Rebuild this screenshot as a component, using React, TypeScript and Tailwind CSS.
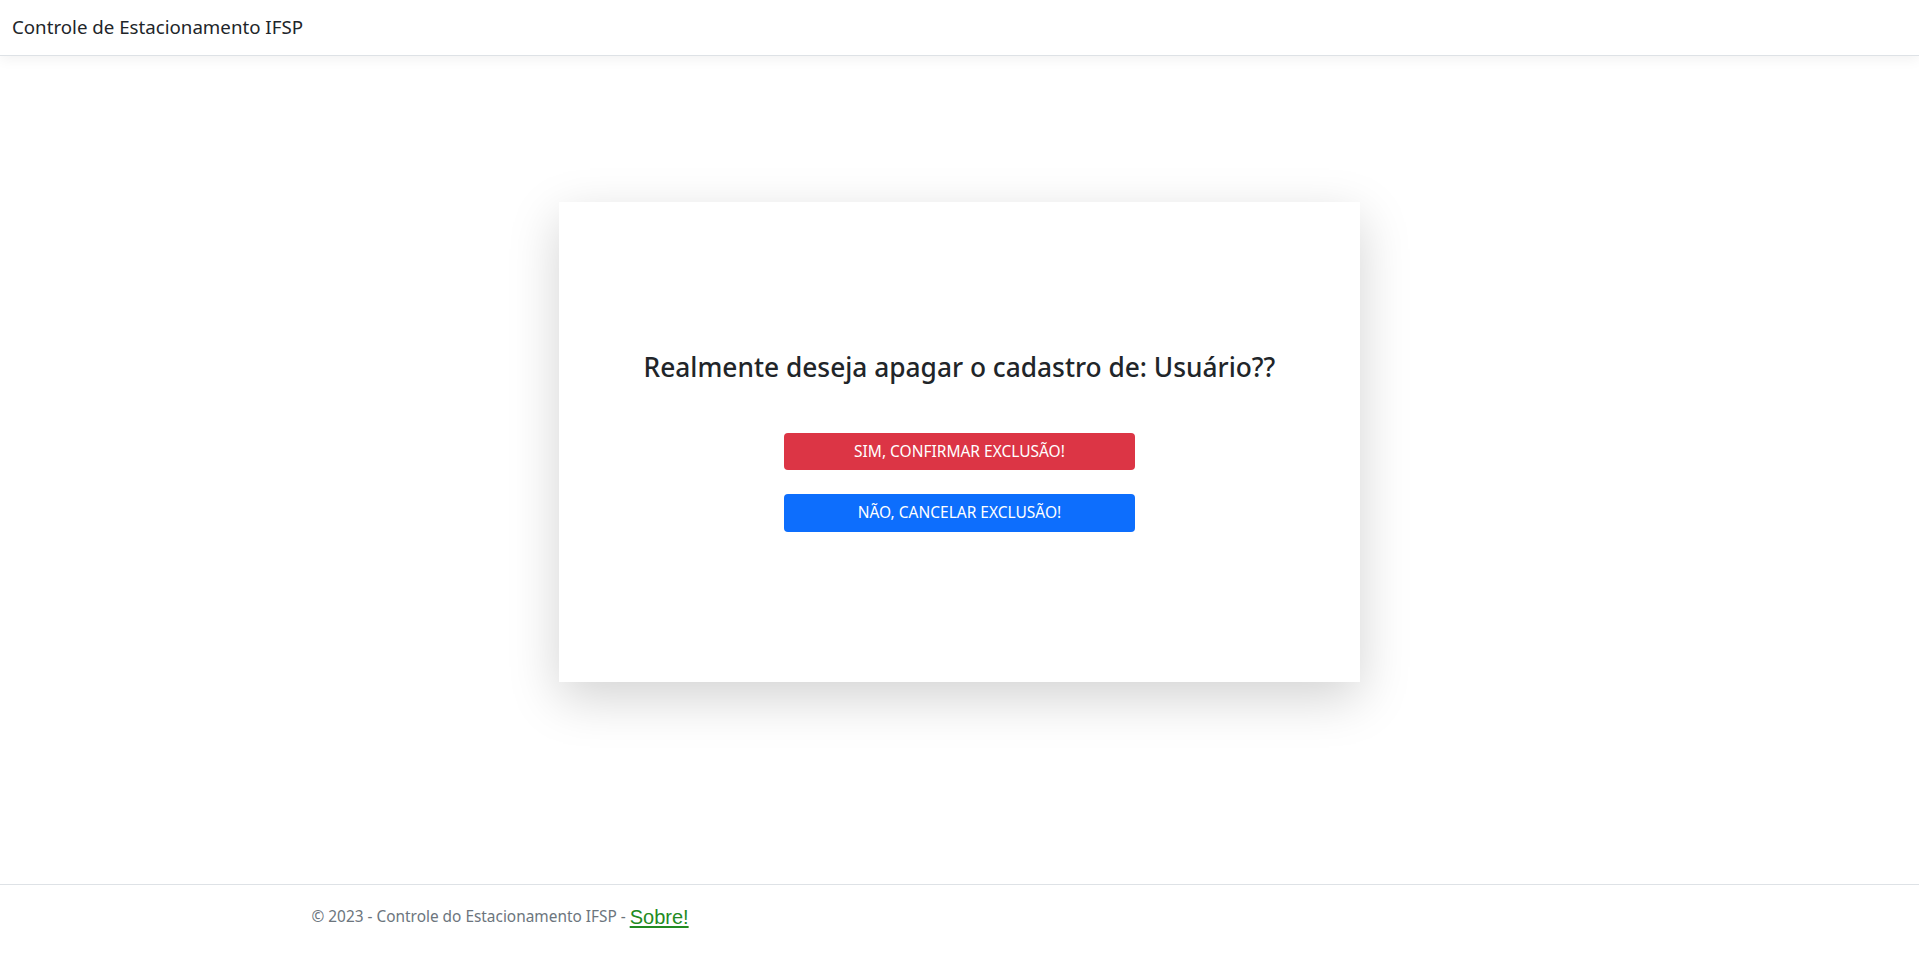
export default function App() {
  return (
    <div className="flex min-h-screen flex-col bg-white font-['Noto_Sans',sans-serif] text-[#212529]">
      <header className="flex h-[56px] items-center border-b border-[#dee2e6] bg-white px-3 shadow-[0_0.25rem_0.75rem_rgba(0,0,0,0.05)]">
        <span className="text-[18.7px] leading-none">Controle de Estacionamento IFSP</span>
      </header>

      <main className="flex-1 pt-[146px]">
        <div className="mx-auto flex h-[480px] w-[801px] flex-col items-center justify-center bg-white shadow-[0_1rem_3rem_rgba(0,0,0,0.175)]">
          <h3 className="mb-[49px] text-[26.3px] font-medium leading-[1.2]">
            Realmente deseja apagar o cadastro de: Usuário??
          </h3>
          <button className="h-[37px] w-[351px] rounded-[4px] bg-[#dc3545] text-[15.5px] uppercase text-white">
            Sim, confirmar exclusão!
          </button>
          <button className="mt-[24px] h-[38px] w-[351px] rounded-[4px] bg-[#0d6efd] text-[15.5px] uppercase text-white">
            Não, cancelar exclusão!
          </button>
        </div>
      </main>

      <footer className="h-[76px] border-t border-[#dee2e6]">
        <div className="mx-auto flex h-full w-[1320px] items-center px-3 pb-[12px] text-[15.4px] text-[#6c757d]">
          <span>© 2023 - Controle do Estacionamento IFSP -&nbsp;</span>
          <a href="#" className="font-['Liberation_Sans',sans-serif] text-[20px] leading-none text-[#228b22] underline underline-offset-2">
            Sobre!
          </a>
        </div>
      </footer>
    </div>
  );
}
